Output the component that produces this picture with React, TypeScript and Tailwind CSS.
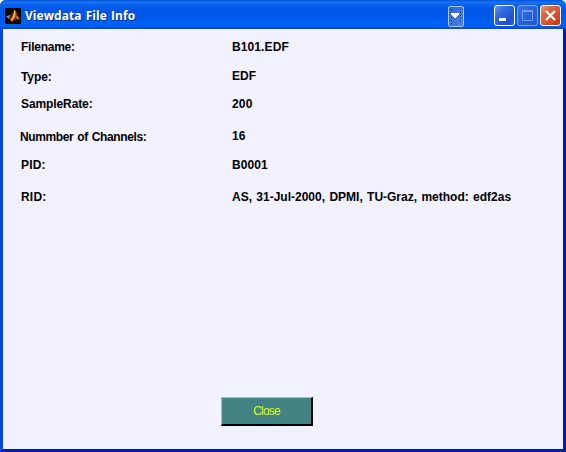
type Row = { label: string; value: string; height: string; labelClass: string; valueClass: string };

const rows: Row[] = [
  { label: "Filename:", value: "B101.EDF", height: "h-[29px]", labelClass: "pl-[18px] tracking-[-0.25px]", valueClass: "tracking-[0.1px]" },
  { label: "Type:", value: "EDF", height: "h-[28px]", labelClass: "pl-[18px] pt-px tracking-[-0.1px]", valueClass: "tracking-[0.1px]" },
  { label: "SampleRate:", value: "200", height: "h-[32px]", labelClass: "pl-[18px] tracking-[-0.1px]", valueClass: "tracking-[0.2px]" },
  { label: "Nummber of Channels:", value: "16", height: "h-[29px]", labelClass: "pl-[17px] pt-px tracking-[-0.38px] [word-spacing:1px]", valueClass: "" },
  { label: "PID:", value: "B0001", height: "h-[32px]", labelClass: "pl-[18px] tracking-[0.2px]", valueClass: "tracking-[0.1px]" },
  { label: "RID:", value: "AS, 31-Jul-2000, DPMI, TU-Graz, method: edf2as", height: "h-[20px]", labelClass: "pl-[18px] tracking-[0.2px]", valueClass: "[word-spacing:1px]" },
];

function MatlabIcon() {
  return (
    <svg width="16" height="16" viewBox="0 0 16 16" className="shrink-0">
      <rect width="16" height="16" fill="#080406" />
      <path d="M1 8.5 L4.5 7 L7 8.5 L4 11 Z" fill="#6d8fa8" />
      <path d="M5 7.2 L7.5 5 L9 2 L8.5 8 L6 11 L4 10 Z" fill="#5a2020" />
      <path d="M9.5 1.5 L11 4 L10.5 9 L7 14 L5 11.5 L8 8 Z" fill="#f47a20" />
      <path d="M9.6 2 L10.3 4 L9.8 8.5 L7 13 L8.2 8.5 Z" fill="#ffc83e" />
      <path d="M10.5 2 L12.5 7 L15 12 L12 11 L9.5 13 L11 8 Z" fill="#a82812" />
      <path d="M11.8 7.5 L14.5 11.5 L11.5 10.2 Z" fill="#f29b32" />
    </svg>
  );
}

function TitleBar() {
  return (
    <header className="flex h-[29px] shrink-0 items-center bg-[linear-gradient(180deg,#0850d8_0,#1674f4_8%,#0860eb_18%,#0055e4_35%,#0058ea_60%,#0062f8_82%,#005cf0_92%,#0048cc_100%)] pl-[5px] pt-[2px]">
      <MatlabIcon />
      <h1 className="ml-[4px] whitespace-nowrap font-['Open_Sans',sans-serif] text-[12px] font-bold leading-4 tracking-[0.05px] text-white [text-shadow:1px_1px_#0a318c] [word-spacing:1px]">
        Viewdata File Info
      </h1>
      <div className="ml-auto flex items-center">
        <button className="mr-[30px] mt-px h-[21px] w-[16px] rounded-[2px] border border-[#a9c8f5] bg-gradient-to-br from-[#2b62d5] to-[#4f84e2]" aria-label="Options">
          <svg width="14" height="19" viewBox="0 0 14 19">
            <path d="M2 6h8v2H9v1H8v1H7v1H5v-1H4V9H3V8H2z" fill="#fff" />
            <path d="M2.5 2v3M2.5 10v7M11.5 2v15" stroke="#173d9a" strokeDasharray="1 2" />
          </svg>
        </button>
        <button className="mr-[2px] h-[21px] w-[21px] rounded-[3px] border border-white bg-[linear-gradient(135deg,#6593f0_0%,#3068de_35%,#1d51ce_80%,#2469e6_100%)]" aria-label="Minimize">
          <svg width="19" height="19"><path d="M4 12h7v3H4z" fill="#fff" /></svg>
        </button>
        <button className="mr-[2px] h-[21px] w-[21px] rounded-[3px] border border-[#7da6ee] bg-[linear-gradient(135deg,#3a73e5,#235fd9_60%,#1d58d3)]" aria-label="Maximize">
          <svg width="19" height="19"><path d="M4.5 4.5h10v10h-10zM4 5.5h11" fill="none" stroke="#729ae8" /></svg>
        </button>
        <button className="mr-[5px] h-[21px] w-[21px] rounded-[3px] border border-white bg-[linear-gradient(135deg,#f09478_0%,#e0603c_35%,#d54821_75%,#b93613_100%)]" aria-label="Close window">
          <svg width="19" height="19"><path d="M5 5l9 9M14 5l-9 9" stroke="#fff" strokeWidth="2.2" /></svg>
        </button>
      </div>
    </header>
  );
}

export default function App() {
  return (
    <div className="h-[452px] w-[566px] overflow-hidden bg-white">
      <div className="flex h-full flex-col overflow-hidden rounded-t-[6px] bg-[#0048d8] [font-family:'Liberation_Sans',sans-serif]">
        <TitleBar />
        <main className="flex min-h-0 flex-1 flex-col border-x-[3px] border-b-[3px] border-b-[#0020a8] border-l-[#0848df] border-r-[#001fa8] bg-[#f1f1ff] pt-[9px]">
          <dl className="text-[12px] font-bold leading-[18px] text-black">
            {rows.map((row) => (
              <div key={row.label} className={`flex whitespace-nowrap ${row.height}`}>
                <dt className={`w-[229px] shrink-0 ${row.labelClass}`}>{row.label}</dt>
                <dd className={row.valueClass}>{row.value}</dd>
              </div>
            ))}
          </dl>
          <button className="mb-[23px] ml-[218px] mt-auto h-[29px] w-[92px] border-b-2 border-r-2 border-l border-t border-b-black border-l-[#9fc4c8] border-r-black border-t-[#9fc4c8] bg-[#438383] text-[12px] leading-[26px] tracking-[-0.8px] text-[#d8ff10]">
            Close
          </button>
        </main>
      </div>
    </div>
  );
}
